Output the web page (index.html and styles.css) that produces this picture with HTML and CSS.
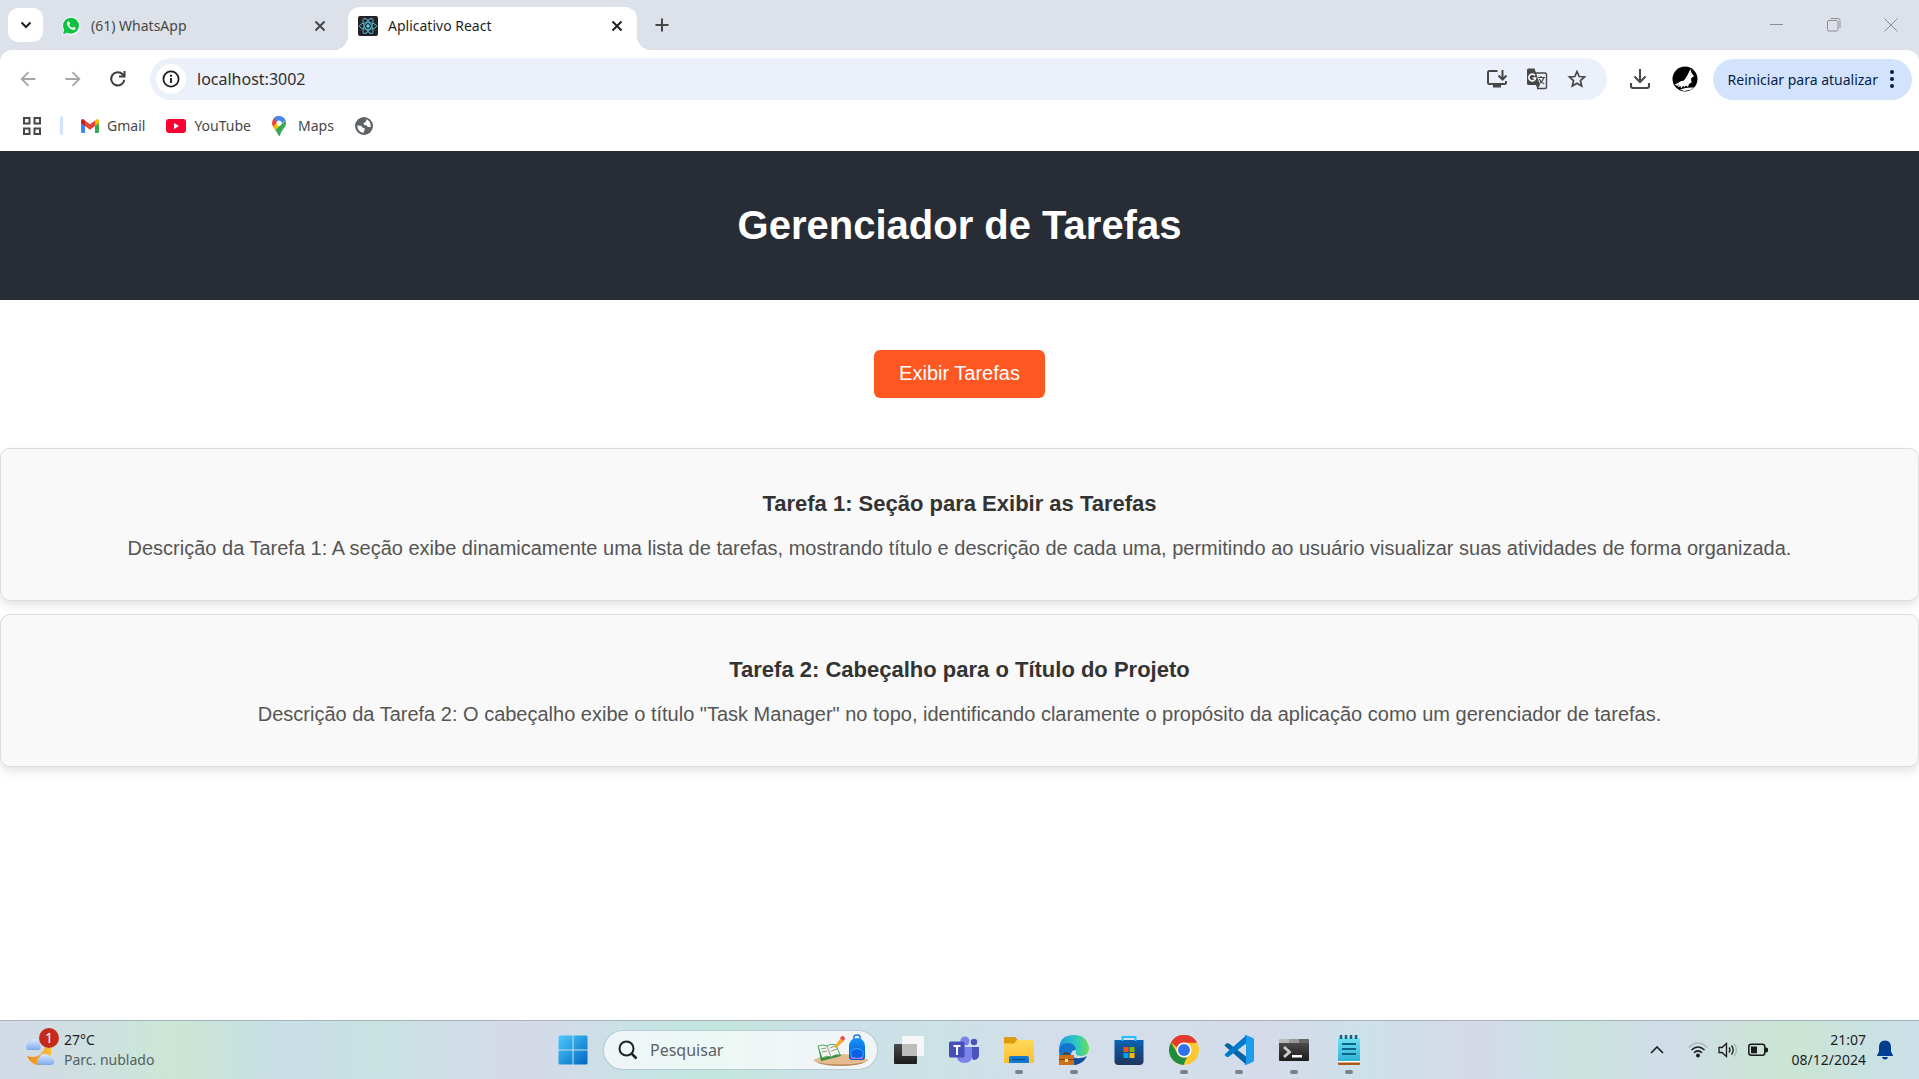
FILE: index.html
```html
<!DOCTYPE html>
<html lang="pt-BR">
<head>
<meta charset="utf-8">
<title>Aplicativo React</title>
<link rel="stylesheet" href="styles.css">
</head>
<body>
<div class="browser">
  <div class="tabstrip">
    <button class="tab-search" aria-label="Pesquisar guias"><svg width="12" height="8" viewBox="0 0 12 8"><path d="M1.5 1.5 6 6l4.500-4.500" fill="none" stroke="#1f1f1f" stroke-width="2"/></svg></button>
    <div class="tab">
      <svg width="20" height="20" viewBox="0 0 20 20"><path d="M1 19l1.400-5A9 9 0 1 1 6 17.700z" fill="#fff"/><circle cx="10" cy="9.700" r="8" fill="#0fc143"/><path d="M2 18l1.200-4.500L6.500 17z" fill="#0fc143"/><path d="M7 5.300c-1.500.8-1.400 2.700-.3 4.500 1.300 2.200 3.500 4.100 5.700 4.100 1.300 0 2.200-.8 2.200-2l-2.300-1.200-1.100 1.200c-1.300-.5-2.300-1.500-3-2.800l.9-1.100-.9-2.300z" fill="#fff"/></svg>
      <span class="tab-title">(61) WhatsApp</span>
      <button class="tab-close" aria-label="Fechar"><svg width="12" height="12" viewBox="0 0 12 12"><path d="M1.500 1.500l9 9m0-9l-9 9" stroke="#474747" stroke-width="2"/></svg></button>
    </div>
    <div class="tab tab-active">
      <svg width="20" height="20" viewBox="0 0 20 20"><rect width="20" height="20" rx="2" fill="#222"/><g fill="none" stroke="#53b5cf"><ellipse cx="10" cy="10" rx="8.500" ry="3.300"/><ellipse cx="10" cy="10" rx="8.500" ry="3.300" transform="rotate(60 10 10)"/><ellipse cx="10" cy="10" rx="8.500" ry="3.300" transform="rotate(120 10 10)"/></g><circle cx="10" cy="10" r="1.700" fill="#61dafb"/></svg>
      <span class="tab-title">Aplicativo React</span>
      <button class="tab-close" aria-label="Fechar"><svg width="12" height="12" viewBox="0 0 12 12"><path d="M1.500 1.500l9 9m0-9l-9 9" stroke="#1f1f1f" stroke-width="2"/></svg></button>
    </div>
    <button class="new-tab" aria-label="Nova guia"><svg width="14" height="14" viewBox="0 0 14 14"><path d="M7 .5v13M.5 7h13" stroke="#474747" stroke-width="2"/></svg></button>
    <div class="window-controls">
      <button aria-label="Minimizar"><svg width="14" height="14" viewBox="0 0 14 14"><path d="M0 6.500h13" stroke="#8b8e92"/></svg></button>
      <button aria-label="Restaurar"><svg width="14" height="14" viewBox="0 0 14 14"><g fill="none" stroke="#8b8e92"><rect x=".5" y="2.500" width="10.500" height="10.500" rx="1.500"/><path d="M3.500.5H11q2 0 2 2V10"/></g></svg></button>
      <button aria-label="Fechar janela"><svg width="14" height="14" viewBox="0 0 14 14"><path d="M.5.5l13 13m0-13l-13 13" stroke="#8b8e92"/></svg></button>
    </div>
  </div>

  <div class="toolbar">
    <button class="nav-button" aria-label="Voltar"><svg width="16" height="16" viewBox="0 0 16 16"><path d="M15.500 8H2M8.500 1.200 1.700 8l6.800 6.800" fill="none" stroke="#a6a6a6" stroke-width="1.800"/></svg></button>
    <button class="nav-button" aria-label="Avançar"><svg width="16" height="16" viewBox="0 0 16 16"><path d="M.5 8H14M7.500 1.200 14.300 8l-6.800 6.800" fill="none" stroke="#a6a6a6" stroke-width="1.800"/></svg></button>
    <button class="nav-button" aria-label="Recarregar"><svg width="18" height="18" viewBox="0 0 18 18"><path d="M15.300 9.800A6.600 6.600 0 1 1 13.600 4.300l2 2" fill="none" stroke="#3c3c3c" stroke-width="2"/><path d="M16.500 1v6.500H10v-2h4.500V1z" fill="#3c3c3c"/></svg></button>
    <div class="omnibox">
      <button class="site-info" aria-label="Ver informações do site"><svg width="18" height="18" viewBox="0 0 18 18"><circle cx="9" cy="9" r="7.600" fill="none" stroke="#1f1f1f" stroke-width="1.800"/><path d="M9 8v5M9 4.800v1.900" stroke="#1f1f1f" stroke-width="1.900"/></svg></button>
      <input class="address" type="text" value="localhost:3002" aria-label="Endereço">
      <button class="omni-button" aria-label="Instalar aplicativo"><svg width="22" height="20" viewBox="0 0 22 20"><path d="M11.500 2H3.500Q2 2 2 3.500v10Q2 15 3.500 15h15q1.500 0 1.500-1.500V12" fill="none" stroke="#474747" stroke-width="2"/><path d="M16.500 1v9M12.500 6.500l4 4 4-4" fill="none" stroke="#474747" stroke-width="2"/><path d="M7 15h8v3.500H7z" fill="#474747"/></svg></button>
      <button class="omni-button" aria-label="Traduzir"><svg width="22" height="22" viewBox="0 0 22 22"><path d="M9 5h10q1.500 0 1.500 1.500v12.500q0 1.500-1.500 1.500h-8" fill="none" stroke="#474747" stroke-width="1.400"/><path d="M2.500.5h6L14 17H2.500Q1 17 1 15.500V2Q1 .5 2.500.5zM10 17h4l-2.500 4z" fill="#474747"/><path d="M9 7.500A3.400 3.400 0 1 0 9.600 10H6.700" fill="none" stroke="#fff" stroke-width="1.600"/><path d="M12 9.500h7M15 8v1.500M17.800 9.500q-1 4-4.300 6M13.300 11q1.500 3.500 5 5" fill="none" stroke="#474747" stroke-width="1.200"/></svg></button>
      <button class="omni-button" aria-label="Favoritar"><svg width="20" height="20" viewBox="0 0 20 20"><path d="M10 2.500l2.200 5 5.400.5-4.100 3.600 1.200 5.400-4.700-2.800L5.300 17l1.200-5.400L2.400 8l5.400-.5z" fill="none" stroke="#474747" stroke-width="1.700"/></svg></button>
    </div>
    <button class="download" aria-label="Downloads"><svg width="20" height="20" viewBox="0 0 20 20"><path d="M10 0v12M4.500 7.500 10 13l5.500-5.500M1 14v3q0 2 2 2h14q2 0 2-2v-3" fill="none" stroke="#474747" stroke-width="2"/></svg></button>
    <button class="profile" aria-label="Perfil"><svg width="26" height="26" viewBox="0 0 26 26"><circle cx="13" cy="13" r="12.500"/><path d="M18.500 3l1 4 2.500 3-3 2.500.5 4-2.500 1.500-1 3-2-1.500-2 2-.5-2-2.500 3-.5-2.500-3 1.500 1.500-3-3 .5 4-3.500 4-1 3-4.500z" fill="#fff"/><path d="M2.500 18.500l5-2-2 3.500zM8 23.500q6-2.500 14-2l-4 2.500-6 1z" fill="#fff"/></svg></button>
    <button class="update">Reiniciar para atualizar<svg width="4" height="18" viewBox="0 0 4 18"><g fill="#041e49"><circle cx="2" cy="2" r="2"/><circle cx="2" cy="9" r="2"/><circle cx="2" cy="16" r="2"/></g></svg></button>
  </div>

  <nav class="bookmarks" aria-label="Favoritos">
    <button class="apps" aria-label="Apps"><svg width="18" height="18" viewBox="0 0 18 18"><path d="M1 1h5.500v5.500H1zM11.500 1H17v5.500h-5.500zM1 11.500h5.500V17H1zM11.500 11.500H17V17h-5.500z" fill="none" stroke="#474747" stroke-width="2"/></svg></button>
    <span class="separator"></span>
    <a href="#gmail"><svg width="18" height="14" viewBox="0 0 18 14"><path d="M0 2v10.500Q0 14 1.500 14H4V6z" fill="#4285f4"/><path d="M18 2v10.500q0 1.500-1.500 1.500H14V6z" fill="#34a853"/><path d="M14 1.500V7l4-3V2q-.5-3-3-1.500z" fill="#fbbc04"/><path d="M4 1.500V7L0 4V2q.5-3 3-1.500z" fill="#c5221f"/><path d="M4 1.500l5 3.800 5-3.800V7l-5 3.800L4 7z" fill="#ea4335"/></svg>Gmail</a>
    <a href="#youtube"><svg width="20" height="14" viewBox="0 0 20 14"><rect width="20" height="14" rx="3" fill="#ff0033"/><path d="M8 4l5 3-5 3z" fill="#fff"/></svg>YouTube</a>
    <a class="maps" href="#maps"><svg width="14" height="20" viewBox="0 0 14 20"><path d="M7 0a7 7 0 0 0-7 7q0 2.500 2 5L7 7z" fill="#ea4335"/><path d="M7 0a7 7 0 0 1 6.500 4.500L7 9 2 2.300A7 7 0 0 1 7 0z" fill="#4285f4"/><path d="M1 10.300 7 5v5l-4 4q-1.300-1.500-2-3.700z" fill="#fbbc04"/><path d="M13.500 4.500Q15 8 12 12q-3 3.500-4 7.200-.8 1.600-1.700 0Q5.500 16.300 3 14z" fill="#34a853"/><circle cx="7" cy="7" r="2.600" fill="#fff"/></svg>Maps</a>
    <a href="#site" aria-label="Site"><svg width="18" height="18" viewBox="0 0 18 18"><circle cx="9" cy="9" r="9" fill="#5f6368"/><path d="M11 2.200q1 2-.8 3.100-2 .3-1.500 2 .3 1 2 .9 1.700-.1 2 1.800h3.100Q16 3.800 11 2.200zM2.200 8.500q4-.2 4.800 1.200.5 1.200 2 1.300 1.300.3.500 1.900-.7.800-.7 2.900Q3 15.500 2.200 8.500z" fill="#fff"/></svg></a>
  </nav>
</div>

<main class="app">
  <header class="app-header"><h1>Gerenciador de Tarefas</h1></header>
  <div class="actions"><button class="show-tasks">Exibir Tarefas</button></div>
  <div class="tasks">
    <section class="task">
      <h2>Tarefa 1: Seção para Exibir as Tarefas</h2>
      <p>Descrição da Tarefa 1: A seção exibe dinamicamente uma lista de tarefas, mostrando título e descrição de cada uma, permitindo ao usuário visualizar suas atividades de forma organizada.</p>
    </section>
    <section class="task">
      <h2>Tarefa 2: Cabeçalho para o Título do Projeto</h2>
      <p>Descrição da Tarefa 2: O cabeçalho exibe o título "Task Manager" no topo, identificando claramente o propósito da aplicação como um gerenciador de tarefas.</p>
    </section>
  </div>
</main>

<footer class="taskbar">
  <button class="weather">
    <span class="weather-icon">
      <svg width="34" height="34" viewBox="0 0 34 34"><defs><linearGradient id="cloud" x2="0" y2="1"><stop stop-color="#dcebff"/><stop offset="1" stop-color="#7fa9ee"/></linearGradient><linearGradient id="moon"><stop stop-color="#f08a1c"/><stop offset="1" stop-color="#fbc037"/></linearGradient></defs><path d="M27 14q2 12-8 18Q8 34 3 23q14 4 18-9z" fill="url(#moon)"/><path d="M4 17a4 4 0 0 1 0-7q1-5 6-4 5 0 6 5 2 6-2 6z" fill="url(#cloud)"/><path d="M15 32a4 4 0 0 1 0-7q2-5 7-4 4 1 5 4 4 1 3 5-1 2-3 2z" fill="url(#cloud)"/></svg>
      <span class="badge">1</span>
    </span>
    <span class="weather-text"><span>27°C</span><span class="muted">Parc. nublado</span></span>
  </button>

  <div class="taskbar-center">
    <button class="task-icon" aria-label="Iniciar"><svg width="30" height="30" viewBox="0 0 30 30"><defs><linearGradient id="win" x2="1" y2="1"><stop stop-color="#4ccbfb"/><stop offset="1" stop-color="#0067c5"/></linearGradient></defs><path d="M2 .5h12.500v14H.5V2Q.5.500 2 .5zM15.500.5H28q1.500 0 1.500 1.500v12.500h-14zM.5 15.500h14v14H2q-1.500 0-1.500-1.500zM15.500 15.500h14V28q0 1.500-1.500 1.500H15.500z" fill="url(#win)"/></svg></button>
    <label class="search">
      <svg width="20" height="20" viewBox="0 0 20 20"><circle cx="8.500" cy="8.500" r="7" fill="none" stroke="#222" stroke-width="2"/><path d="M13.500 13.500l5 5" stroke="#222" stroke-width="2.500"/></svg>
      <input type="search" placeholder="Pesquisar" aria-label="Pesquisar">
      <svg width="58" height="32" viewBox="0 0 58 32"><defs><linearGradient id="bag" x2="0" y2="1"><stop stop-color="#1497fb"/><stop offset="1" stop-color="#0650cf"/></linearGradient></defs><path d="M1 26q27-12 56 0-7 5-28 5T1 26z" fill="#e3bb8e"/><path d="M3 28q26 5 51 0-8 4-25 4T3 28z" fill="#b98658"/><path d="M6 13l3 14 20-5-1-2-17 4z" fill="#2f8a45"/><path d="M6 12q5-2 9 0 4-3 9-1l4 10q-5-1-9 2-4-2-9 1z" fill="#f3f6ee" stroke="#4da35f"/><path d="M15 12l4 11M9 15l5-1m-4 4l5-1m3-3l5-2m-4 5l6-2" stroke="#8e9c8e" fill="none"/><path d="M22 13l7-9 3 3-8 7z" fill="#f7a928"/><path d="M28 4l2-2q3 0 3 3l-2 2z" fill="#e74b56"/><path d="M42 5q-1-4 3-4t3 4" fill="none" stroke="#1b72e4" stroke-width="1.500"/><path d="M37 12q1-8 8-8t8 8v11q0 3-3 3H40q-3 0-3-3z" fill="url(#bag)"/><path d="M39 17q6-5 12 0v6q-6 3-12 0z" fill="#0b5ee0" stroke="#2fb0ff"/><path d="M39 23q6 2 12 0v2H39z" fill="#b070e8"/></svg>
    </label>
    <button class="task-icon" aria-label="Visão de tarefas"><svg width="30" height="30" viewBox="0 0 30 30"><defs><linearGradient id="dark" x2="0" y2="1"><stop stop-color="#4a4a4a"/><stop offset="1" stop-color="#1c1c1c"/></linearGradient></defs><rect y="9" width="23" height="20" rx="1" fill="url(#dark)"/><rect x="8" y="1" width="22" height="20" rx="1" fill="#f8f8f8" opacity=".9"/><path d="M8 9h15v12H8z" fill="#bdbdbd"/></svg></button>
    <button class="task-icon" aria-label="Teams"><svg width="30" height="30" viewBox="0 0 30 30"><circle cx="25" cy="7" r="3.200" fill="#4b53bc"/><path d="M18 12h12v8q0 5-6 5z" fill="#4b53bc"/><circle cx="16" cy="6" r="4.600" fill="#7b83eb"/><path d="M8 12h15v9q0 7-7.500 7T8 21z" fill="#7b83eb"/><rect y="6.500" width="15.500" height="16" rx="1.500" fill="#464eb8"/><path d="M4.500 11h7M8 11v9" stroke="#fff" stroke-width="2"/></svg></button>
    <button class="task-icon running" aria-label="Explorador de Arquivos"><svg width="30" height="30" viewBox="0 0 30 30"><defs><linearGradient id="folder" x2="0" y2="1"><stop stop-color="#ffd95c"/><stop offset="1" stop-color="#fdbe2c"/></linearGradient></defs><path d="M0 3q0-1 1-1h10l3 3h15v8H0z" fill="#dd9a0b"/><path d="M0 8.500h10L13 5h16q1 0 1 1v22H0z" fill="url(#folder)"/><path d="M5 28v-5q0-2 2-2h16q2 0 2 2v5z" fill="#1179cf"/><path d="M8.500 24.500h13" stroke="#074f93" stroke-width="1.500"/></svg></button>
    <button class="task-icon running" aria-label="Edge"><svg width="30" height="30" viewBox="0 0 30 30"><defs><linearGradient id="edge"><stop stop-color="#1b9de2"/><stop offset=".6" stop-color="#30c9c0"/><stop offset="1" stop-color="#6be04c"/></linearGradient></defs><path d="M0 15Q0 0 15 0q13 0 15 13 0 7-7 8-8 0-6-5-1-6-8-6-6 0-9 5z" fill="url(#edge)"/><path d="M0 15q1-7 9-7 7 0 8 7-5 0-5 5 0 6 6 10Q0 32 0 15z" fill="#1276ce"/><path d="M12 20q3 4 9 3 4 0 7-2-4 8-12 9z" fill="#134f98"/><path d="M5 20q0-2 2-2t3 2" fill="none" stroke="#633409" stroke-width="1.500"/><path d="M0 20h15v10H0z" fill="#cb7014"/><path d="M0 24h15v1H0z" fill="#75400c"/><path d="M6 24h3v3H6z" fill="#ffe190"/></svg></button>
    <button class="task-icon" aria-label="Microsoft Store"><svg width="30" height="30" viewBox="0 0 30 30"><defs><linearGradient id="store" x2="0" y2="1"><stop stop-color="#0b63b4"/><stop offset="1" stop-color="#20345c"/></linearGradient></defs><path d="M.5 5h29v21q0 4-4 4h-21q-4 0-4-4z" fill="url(#store)"/><path d="M8.500 6V2h13v4" fill="none" stroke="#27c0f5" stroke-width="2"/><path d="M9.500 12h5v5h-5z" fill="#f25022"/><path d="M15.500 12h5v5h-5z" fill="#7fba00"/><path d="M9.500 18h5v5h-5z" fill="#00a4ef"/><path d="M15.500 18h5v5h-5z" fill="#ffb900"/></svg></button>
    <button class="task-icon running" aria-label="Chrome"><svg width="30" height="30" viewBox="0 0 30 30"><circle cx="15" cy="15" r="15" fill="#fcc934"/><path d="M2 7.500A15 15 0 0 1 28 7.500H15a7.500 7.500 0 0 0-7 5z" fill="#e33b2e"/><path d="M2 7.500 8.500 18.700A7.500 7.500 0 0 0 18 22l-3.500 8A15 15 0 0 1 2 7.500z" fill="#1e8e3e"/><path d="M2 7.500A15 15 0 0 1 28 7.500z" fill="#e33b2e"/><circle cx="15" cy="15" r="7.500" fill="#fff"/><circle cx="15" cy="15" r="6" fill="#2f72ea"/></svg></button>
    <button class="task-icon running" aria-label="Visual Studio Code"><svg width="30" height="30" viewBox="0 0 30 30"><path d="M1 9.500l2-1.300q1-.4 2 .3L22 21.500v8L1 11q-.8-.8 0-1.500z" fill="#0065a9"/><path d="M1 20.500l2 1.400q1 .4 2-.4L22 8.500V.5L1 19q-.8.700 0 1.500z" fill="#007acc"/><path d="M22 0l7 3q1 .6 1 2v20q0 1.400-1 2l-7 3q-1 .2-1.500-.7 1.500 0 1.500-1.800V2.500Q22 .7 20.500.7 21-.2 22 0z" fill="#1f9cf0"/></svg></button>
    <button class="task-icon running" aria-label="Terminal"><svg width="30" height="30" viewBox="0 0 30 30"><path d="M0 5q0-1 1-1h28q1 0 1 1v3H0z" fill="#b8b8b8"/><path d="M10 4h10v4H10z" fill="#999"/><path d="M20 4h9q1 0 1 1v3H20z" fill="#666"/><path d="M0 8h30v17q0 1-1 1H1q-1 0-1-1z" fill="url(#dark)"/><path d="M5 12l5.500 5L5 22" fill="none" stroke="#ccc" stroke-width="2.800"/><path d="M13 20h10v2.500H13z" fill="#fff"/></svg></button>
    <button class="task-icon running" aria-label="Bloco de Notas"><svg width="30" height="30" viewBox="0 0 30 30"><defs><linearGradient id="note" x2="0" y2="1"><stop stop-color="#72dff3"/><stop offset="1" stop-color="#2fb2d6"/></linearGradient></defs><path d="M4 27h22v2q0 1-1 1H5q-1 0-1-1z" fill="#a85917"/><path d="M4 25h22v2.500H4z" fill="#fff"/><path d="M4 4q0-1 1-1h20q1 0 1 1v22H4z" fill="url(#note)"/><path d="M7 0v4m5-4v4m5-4v4m5-4v4" stroke="#14607f" stroke-width="2.500"/><path d="M8 9h14M8 14h14M8 19h14" stroke="#0b6388" stroke-width="2"/></svg></button>
  </div>

  <div class="tray">
    <button class="tray-more" aria-label="Ícones ocultos"><svg width="14" height="8" viewBox="0 0 14 8"><path d="M1 7l6-6 6 6" fill="none" stroke="#1a1a1a" stroke-width="1.600"/></svg></button>
    <button class="tray-status" aria-label="Rede, volume e bateria">
      <svg width="20" height="18" viewBox="0 0 20 18"><g fill="none" stroke-width="1.500"><path d="M.8 6.500q9.200-9 18.400 0" stroke="#a9b8bb"/><path d="M3.500 9q6.500-6 13 0M6 11.700q4-3.700 8 0" stroke="#1a1a1a"/></g><circle cx="10" cy="14.500" r="1.900" fill="#1a1a1a"/></svg>
      <svg width="20" height="16" viewBox="0 0 20 16"><g fill="none" stroke="#1a1a1a" stroke-width="1.300"><path d="M1 5.500h3L8.500 1.500v13L4 10.500H1z"/><path d="M11 5.500q2 2.500 0 5M13.500 3.500q3.500 4.500 0 9"/><path d="M16 1.500q5 6.500 0 13" stroke="#a9b8bb"/></g></svg>
      <svg width="20" height="14" viewBox="0 0 20 14"><rect x=".8" y="1.300" width="16" height="11" rx="2.500" fill="none" stroke="#1a1a1a" stroke-width="1.500"/><rect x="3" y="3.500" width="6" height="6.800" fill="#1a1a1a"/><path d="M17 4.500h1.500l1.500 1v3l-1.500 1H17z" fill="#1a1a1a"/></svg>
    </button>
    <button class="clock"><span>21:07</span><span>08/12/2024</span></button>
    <button class="bell" aria-label="Notificações"><svg width="16" height="20" viewBox="0 0 16 20"><path d="M8 .5q6 .3 6 6.500v4.500l2 4V16H0v-.5l2-4V7Q2 .8 8 .5zM5 17h6q-.5 2.500-3 2.500T5 17z" fill="#003e92"/></svg></button>
  </div>
</footer>
</body>
</html>
```

FILE: styles.css
```css
* { box-sizing: border-box; }

body {
  margin: 0;
  min-height: 100vh;
  display: flex;
  flex-direction: column;
  background: #fff;
  font-family: "Noto Sans", "Open Sans", sans-serif;
  font-size: 14px;
  color: #1f1f1f;
}

button {
  display: flex;
  align-items: center;
  justify-content: center;
  padding: 0;
  border: 0;
  background: none;
  font: inherit;
  color: inherit;
}

svg { display: block; flex: none; }

/* Browser tabs */
.browser { background: #dde1e9; }

.tabstrip {
  display: flex;
  gap: 8px;
  height: 50px;
  padding-left: 8px;
}

.tab-search {
  width: 35px;
  height: 34px;
  margin-top: 8px;
  border-radius: 10px;
  background: #fff;
}

.tab {
  display: flex;
  align-items: center;
  width: 289px;
  height: 43px;
  margin-top: 7px;
  padding: 0 14px 6px 10px;
  color: #474747;
}

.tab-title { flex: 1; margin-left: 10px; }

.tab-close { width: 12px; height: 12px; }

.tab-active {
  position: relative;
  border-radius: 12px 12px 0 0;
  background: #fff;
  color: #1f1f1f;
}

.tab-active::before,
.tab-active::after {
  content: "";
  position: absolute;
  bottom: 0;
  width: 14px;
  height: 14px;
}

.tab-active::before {
  left: -14px;
  background: radial-gradient(circle at 0 0, transparent 14px, #fff 14px);
}

.tab-active::after {
  right: -14px;
  background: radial-gradient(circle at 100% 0, transparent 14px, #fff 14px);
}

.new-tab { width: 34px; }

.window-controls { display: flex; margin-left: auto; }

.window-controls button { width: 57px; }

/* Navigation bar */
.toolbar {
  display: flex;
  align-items: center;
  height: 58px;
  padding: 0 7px 0 5px;
  border-radius: 12px 12px 0 0;
  background: #fff;
}

.nav-button { width: 45px; height: 42px; }

.omnibox {
  display: flex;
  flex: 1;
  align-items: center;
  height: 42px;
  margin-left: 10px;
  padding: 0 10px 0 6px;
  border-radius: 21px;
  background: #ebf0fa;
}

.site-info {
  width: 30px;
  height: 30px;
  border-radius: 50%;
  background: #fff;
}

.address {
  flex: 1;
  min-width: 0;
  margin-left: 11px;
  padding: 0;
  border: 0;
  outline: 0;
  background: none;
  font: inherit;
  font-size: 16px;
  color: #2f2f2f;
}

.omni-button { width: 40px; height: 40px; }

.download { width: 40px; margin-left: 13px; }

.profile { width: 50px; }

.update {
  gap: 12px;
  height: 41px;
  margin-left: 3px;
  padding: 0 18px 0 15px;
  border-radius: 21px;
  background: #d3e3fd;
  color: #041e49;
}

/* Bookmarks bar */
.bookmarks {
  display: flex;
  align-items: center;
  gap: 21px;
  height: 43px;
  padding: 0 0 8px 23px;
  background: #fff;
  color: #474747;
}

.separator {
  width: 3px;
  height: 19px;
  margin: 0 -3px 0 -2px;
  border-radius: 2px;
  background: #d3e3fd;
}

.bookmarks a {
  display: flex;
  align-items: center;
  gap: 8px;
  color: inherit;
  text-decoration: none;
}

.bookmarks .maps { gap: 12px; }

/* Task manager page */
.app {
  flex: 1;
  font-family: "Liberation Sans", Arial, sans-serif;
  text-align: center;
}

.app-header {
  padding: 52px 24px;
  background: #282c34;
  color: #fff;
}

.app-header h1 {
  margin: 0;
  font-size: 40px;
  line-height: 45px;
}

.actions {
  display: flex;
  justify-content: center;
  padding: 50px 0;
}

.show-tasks {
  height: 48px;
  padding: 0 25px 2px;
  border-radius: 6px;
  background: #ff5722;
  font-size: 20px;
  color: #fff;
}

.tasks { display: grid; gap: 13px; }

.task {
  padding: 40px;
  border: 1px solid #ddd;
  border-radius: 10px;
  background: #f9f9f9;
  box-shadow: 0 5px 10px rgba(0, 0, 0, .1);
}

.task h2 {
  margin: 0 0 18px;
  font-size: 22px;
  line-height: 29px;
  color: #333;
}

.task p {
  margin: 0;
  font-size: 20px;
  line-height: 24px;
  color: #555;
}

/* Windows taskbar */
.taskbar {
  display: grid;
  grid-template-columns: 1fr auto 1fr;
  align-items: center;
  height: 59px;
  border-top: 1px solid #a9b3bd;
  background: linear-gradient(90deg, #d3d9e8 0, #cbe4dc 7%, #cce6d3 9%, #c8e1e2 13%, #c8dfe6 15%, #c8e2e2 20%, #d2dde8 25%, #d5d9e7 27%, #d2dbe8 29%, #c4e5e2 35%, #c4e6dc 38%, #cde0e8 43%, #cbe2e6 49%, #d3deea 54%, #d3deea 62%, #d5dae9 66%, #cde1e9 71%, #d5d9e8 77%, #cde0e6 80%, #c9e3dc 82%, #d0dde8 87%, #cbe5d3 93%, #c9e2e2 97%, #cde0e8 100%);
}

.weather { justify-self: start; gap: 6px; margin-left: 24px; }

.weather-icon { position: relative; }

.badge {
  position: absolute;
  top: -5px;
  left: 15px;
  width: 20px;
  height: 20px;
  border-radius: 50%;
  background: #c42b1c;
  line-height: 20px;
  color: #fff;
}

.weather-text {
  display: grid;
  text-align: left;
  line-height: 20px;
}

.muted { color: #55605f; }

.taskbar-center { display: flex; align-items: center; padding-left: 2px; }

.task-icon { position: relative; width: 55px; height: 58px; }

.running::after {
  content: "";
  position: absolute;
  bottom: 5px;
  width: 8px;
  height: 4px;
  border-radius: 2px;
  background: #7b8087;
}

.search {
  display: flex;
  align-items: center;
  width: 273px;
  height: 38px;
  margin: 0 4px;
  padding: 0 7px 0 14px;
  border-radius: 19px;
  background: rgba(255, 255, 255, .7);
  box-shadow: 0 0 0 1px rgba(140, 160, 180, .35);
}

.search input {
  flex: 1;
  min-width: 0;
  margin-left: 12px;
  padding: 0;
  border: 0;
  outline: 0;
  background: none;
  font: inherit;
  font-size: 16px;
}

.search input::placeholder { color: #5c6266; }

.tray {
  display: flex;
  align-items: center;
  justify-self: end;
  padding-right: 26px;
}

.tray-more { width: 34px; }

.tray-status { gap: 10px; margin-left: 14px; }

.clock {
  flex-direction: column;
  align-items: flex-end;
  margin-left: 24px;
  line-height: 20px;
}

.bell { margin-left: 11px; }
```
